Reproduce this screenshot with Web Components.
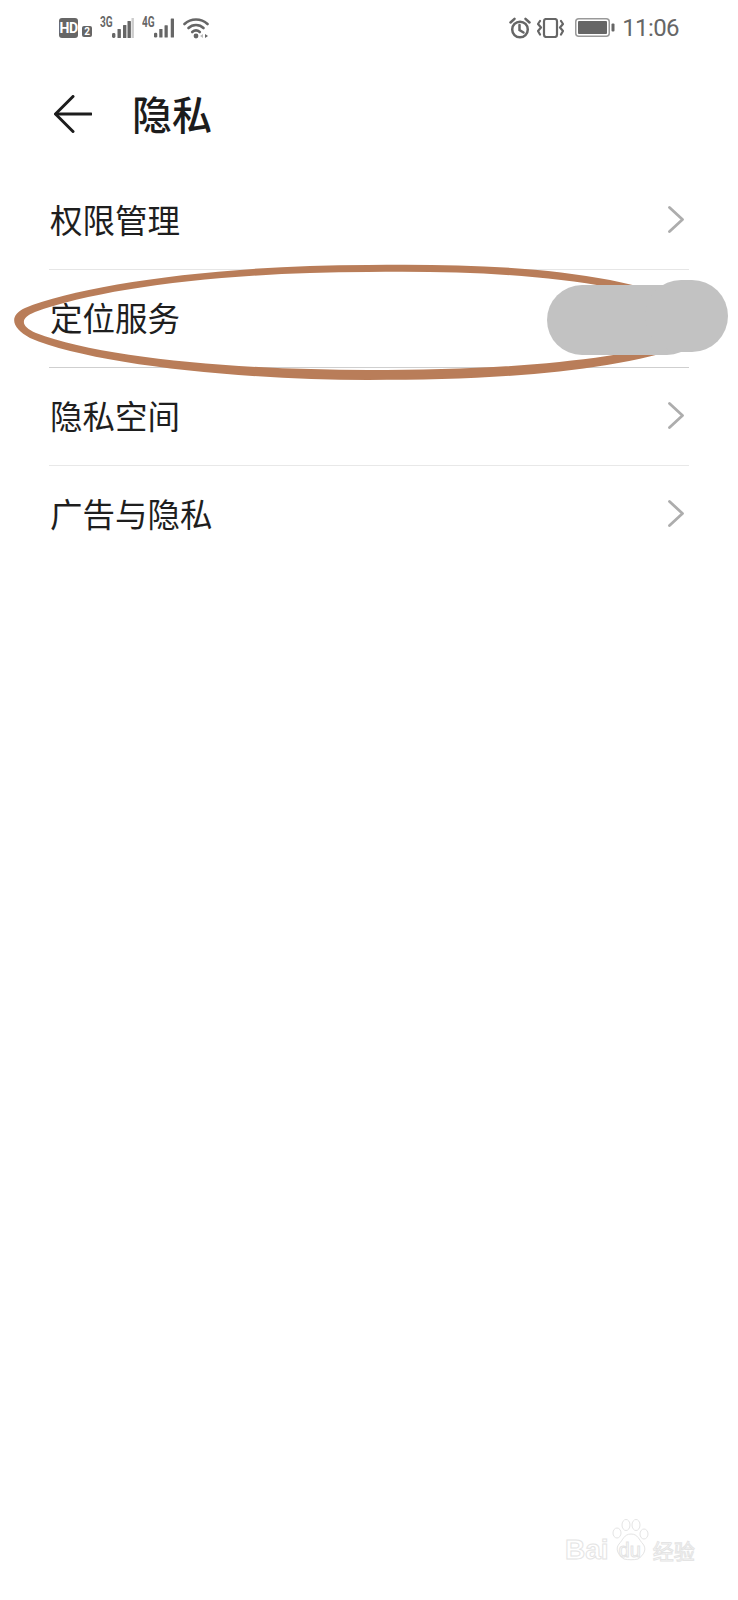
<!DOCTYPE html>
<html lang="zh">
<head>
<meta charset="utf-8">
<title>隐私</title>
<style>
  html, body { margin: 0; background: #fff; }
  body {
    position: relative;
    width: 738px;
    height: 1600px;
    overflow: hidden;
    font-family: "Noto Sans CJK SC", "Noto Sans", sans-serif;
  }
</style>
</head>
<body>
<privacy-screen>
  <status-bar></status-bar>
  <page-header>隐私</page-header>
  <settings-list>
    <settings-row style="--rule:#e6e6e6">权限管理</settings-row>
    <settings-row plain style="--rule:#cfcfcf">定位服务</settings-row>
    <settings-row style="--rule:#e8e8e8">隐私空间</settings-row>
    <settings-row last>广告与隐私</settings-row>
  </settings-list>
</privacy-screen>
<photo-markup></photo-markup>
<baidu-mark></baidu-mark>

<script>
class PrivacyScreen extends HTMLElement {
    constructor() {
        super();
        this.attachShadow({ mode: "open" });
        this.shadowRoot.innerHTML = `
      <style>
      :host{ display: flex; flex-direction: column; }
      </style>
      <slot></slot>`;
    }
}

class StatusBar extends HTMLElement {
    constructor() {
        super();
        this.attachShadow({ mode: "open" });
        this.shadowRoot.innerHTML = /*html*/`
      <style>
      :host{
        display: flex;
        align-items: center;
        justify-content: space-between;
        height: 55px;
        padding: 0 59px 0 59px;
        color: #666;
        font-family: "Roboto", "Liberation Sans", sans-serif;
      }
      .side{ display: flex; align-items: center; }
      svg{ display: block; }
      .hd{
        width: 19px; height: 20px;
        border-radius: 3px;
        background: #666; color: #fff;
        font-size: 14px; font-weight: 700; line-height: 20px;
        letter-spacing: -.5px;
        text-align: center;
      }
      .sim{
        width: 10px; height: 11px;
        margin: 7px 0 0 4px;
        border-radius: 2px;
        background: #666; color: #fff;
        font-size: 10px; font-weight: 700; line-height: 11px;
        text-align: center;
      }
      .net{ position: relative; display: flex; align-items: flex-end; height: 21px; }
      .net span{
        position: absolute; left: 0; top: -2px;
        font-size: 14px; font-weight: 700; line-height: 15px;
        transform: scaleX(.72); transform-origin: 0 0;
      }
      .time{ margin-left: 7px; font-size: 24px; line-height: 28px; letter-spacing: -.6px; }
      </style>
      <div class="side">
        <div class="hd">HD</div>
        <div class="sim">2</div>
        <div class="net" style="margin-left:8px;width:34px">
          <span>3G</span>
          <svg style="margin-left:12px" width="22" height="20" viewBox="0 0 22 20" fill="#666">
            <rect x="0" y="15" width="3.400" height="5" rx="1.400"/>
            <rect x="5.500" y="11" width="3.400" height="9" rx=".6"/>
            <rect x="11" y="7" width="3.400" height="13" rx=".6"/>
            <rect x="15.500" y="3" width="3.400" height="17" rx=".6"/>
            <rect x="19.500" y="0" width="2.400" height="20" fill="#ccc"/>
          </svg>
        </div>
        <div class="net" style="margin-left:8px;width:34px">
          <span>4G</span>
          <svg style="margin-left:12px" width="23" height="20" viewBox="0 0 23 20" fill="#666">
            <rect x="0" y="15" width="3.400" height="5" rx="1.400"/>
            <rect x="5.500" y="11" width="3.400" height="9" rx=".6"/>
            <rect x="11" y="7" width="3.400" height="13" rx=".6"/>
            <rect x="17.500" y="0" width="3.400" height="20" rx=".6"/>
          </svg>
        </div>
        <svg style="margin-left:7px" width="26" height="22" viewBox="0 0 26 22" fill="none" stroke="#666" stroke-width="2.600" stroke-linecap="round">
          <path d="M1.500 7 C8 1 18 1 24.500 7"/>
          <path d="M5.500 11 C9.500 7 16.500 7 20.500 11"/>
          <path d="M9.200 15 C11.500 13 14.500 13 16.800 15"/>
          <circle cx="13" cy="19" r="2.400" fill="#666" stroke="none"/>
          <path d="M20 17 L17 19 L20 21Z" fill="#bbb" stroke="none"/>
          <path d="M22 17 L25 19 L22 21Z" fill="#666" stroke="none"/>
        </svg>
      </div>
      <div class="side">
        <svg width="22" height="22" viewBox="0 0 22 22" fill="none" stroke="#666" stroke-width="2.500" stroke-linecap="round">
          <circle cx="11" cy="12.500" r="7.800"/>
          <path d="M10.500 8 V13 L14.500 15.500"/>
          <path d="M1.500 5.500 L5.500 1.800"/>
          <path d="M20.500 5.500 L16.500 1.800"/>
        </svg>
        <svg style="margin-left:6px" width="27" height="20" viewBox="0 0 27 20" fill="none" stroke="#666" stroke-width="2.200" stroke-linecap="round" stroke-linejoin="round">
          <rect x="7" y="1" width="13" height="18" rx="2.200"/>
          <path d="M3 3 L1 6 L4 9.500 L1 13 L3 16.500"/>
          <path d="M24 3 L26 6 L23 9.500 L26 13 L24 16.500"/>
        </svg>
        <svg style="margin-left:11px" width="40" height="19" viewBox="0 0 40 19">
          <rect x=".75" y=".75" width="33.500" height="17.500" rx="3" fill="none" stroke="#999" stroke-width="1.500"/>
          <rect x="3" y="3" width="29" height="13" rx="1" fill="#666"/>
          <rect x="36.500" y="5.500" width="3" height="8" rx="1" fill="#666"/>
        </svg>
        <div class="time">11:06</div>
      </div>`;
    }
}

class PageHeader extends HTMLElement {
    constructor() {
        super();
        this.attachShadow({ mode: "open" });
        this.shadowRoot.innerHTML = /*html*/`
      <style>
      :host{
        display: flex;
        align-items: center;
        gap: 40px;
        height: 117px;
        padding: 0 0 0 54px;
        color: #1c1c1c;
        font-size: 40px;
        font-weight: 500;
      }
      .title{ line-height: 1; margin-top: -2px; }
      svg{ display: block; flex: none; }
      </style>
      <svg width="38" height="38" viewBox="0 0 38 38" fill="none" stroke="#1c1c1c" stroke-width="3" stroke-linecap="round" stroke-linejoin="round">
        <path d="M37 19 H2"/>
        <path d="M19 1.500 L1.500 19 L19 36.500"/>
      </svg>
      <div class="title"><slot></slot></div>`;
    }
}

class SettingsList extends HTMLElement {
    constructor() {
        super();
        this.attachShadow({ mode: "open" });
        this.shadowRoot.innerHTML = `
      <style>
      :host{ display: block; padding: 0 49px; }
      </style>
      <slot></slot>`;
    }
}

class SettingsRow extends HTMLElement {
    constructor() {
        super();
        this.attachShadow({ mode: "open" });
        this.shadowRoot.innerHTML = /*html*/`
      <style>
      :host{
        display: flex;
        align-items: center;
        justify-content: space-between;
        box-sizing: border-box;
        height: 98px;
        border-bottom: 1px solid var(--rule, #dcdcdc);
        color: #1e1e1e;
        font-size: 32.500px;
      }
      :host([last]){ border-bottom-color: transparent; }
      :host([plain]) svg{ visibility: hidden; }
      .label{ margin: -4px 0 0 1px; }
      svg{ display: block; margin: -2px 5px 0 0; }
      </style>
      <div class="label"><slot></slot></div>
      <svg width="16" height="27" viewBox="0 0 16 27" fill="none" stroke="#adadad" stroke-width="2.800" stroke-linecap="round" stroke-linejoin="round">
        <path d="M1.500 1.500 L14.500 13.500 L1.500 25.500"/>
      </svg>`;
    }
}

// hand drawn ring and grey smear on top of the screenshot
class PhotoMarkup extends HTMLElement {
    constructor() {
        super();
        this.attachShadow({ mode: "open" });
        this.shadowRoot.innerHTML = /*html*/`
      <style>
      :host{ position: absolute; left: 0; top: 0; width: 738px; height: 400px; pointer-events: none; }
      svg{ display: block; }
      </style>
      <svg width="738" height="400" viewBox="0 0 738 400">
        <path fill-rule="evenodd" fill="#b97d59" d="M368 265 C220 265 80 285 25 308 C8 316 12 328 30 338 C90 364 240 380 368 380 C500 380 610 372 690 345 L690 305 C620 270 490 263 368 265Z
          M368 272 C230 272 100 288 35 312 C20 318 20 326 36 333 C100 358 240 370 368 370 C500 370 610 362 690 338 L690 312 C620 278 490 270 368 272Z"/>
        <rect x="547" y="285" width="155" height="70" rx="35" fill="#c2c2c2"/>
        <rect x="645" y="280" width="83" height="72" rx="36" fill="#c2c2c2"/>
      </svg>`;
    }
}

class BaiduMark extends HTMLElement {
    constructor() {
        super();
        this.attachShadow({ mode: "open" });
        this.shadowRoot.innerHTML = /*html*/`
      <style>
      :host{
        position: absolute; left: 565px; top: 1534px;
        display: flex; align-items: center;
        height: 32px;
        color: transparent;
        -webkit-text-stroke: 1px #e4e4e4;
        font-family: "Liberation Sans", "Noto Sans CJK SC", sans-serif;
        font-size: 28px;
        font-weight: 700;
      }
      .du{ font-size: 20px; font-weight: 400; margin-left: 10px; }
      .cn{ font-size: 21px; margin-left: 12px; font-weight: 400; }
      svg{ position: absolute; left: 45px; top: -15px; }
      </style>
      <svg width="42" height="42" viewBox="0 0 42 42" fill="none" stroke="#e4e4e4" stroke-width="1">
        <ellipse cx="7" cy="14" rx="4" ry="5"/>
        <ellipse cx="16" cy="6" rx="4" ry="5.500"/>
        <ellipse cx="26" cy="6" rx="4" ry="5.500"/>
        <ellipse cx="34" cy="15" rx="4" ry="5"/>
        <path d="M21 15 C14 15 13 21 9 25 C5 30 8 36 14 40 C18 41 24 41 28 40 C34 36 37 30 33 25 C29 21 28 15 21 15Z"/>
      </svg>
      <span>Bai</span><span class="du">du</span><span class="cn">经验</span>`;
    }
}

customElements.define("privacy-screen", PrivacyScreen);
customElements.define("status-bar", StatusBar);
customElements.define("page-header", PageHeader);
customElements.define("settings-list", SettingsList);
customElements.define("settings-row", SettingsRow);
customElements.define("photo-markup", PhotoMarkup);
customElements.define("baidu-mark", BaiduMark);
</script>
</body>
</html>
